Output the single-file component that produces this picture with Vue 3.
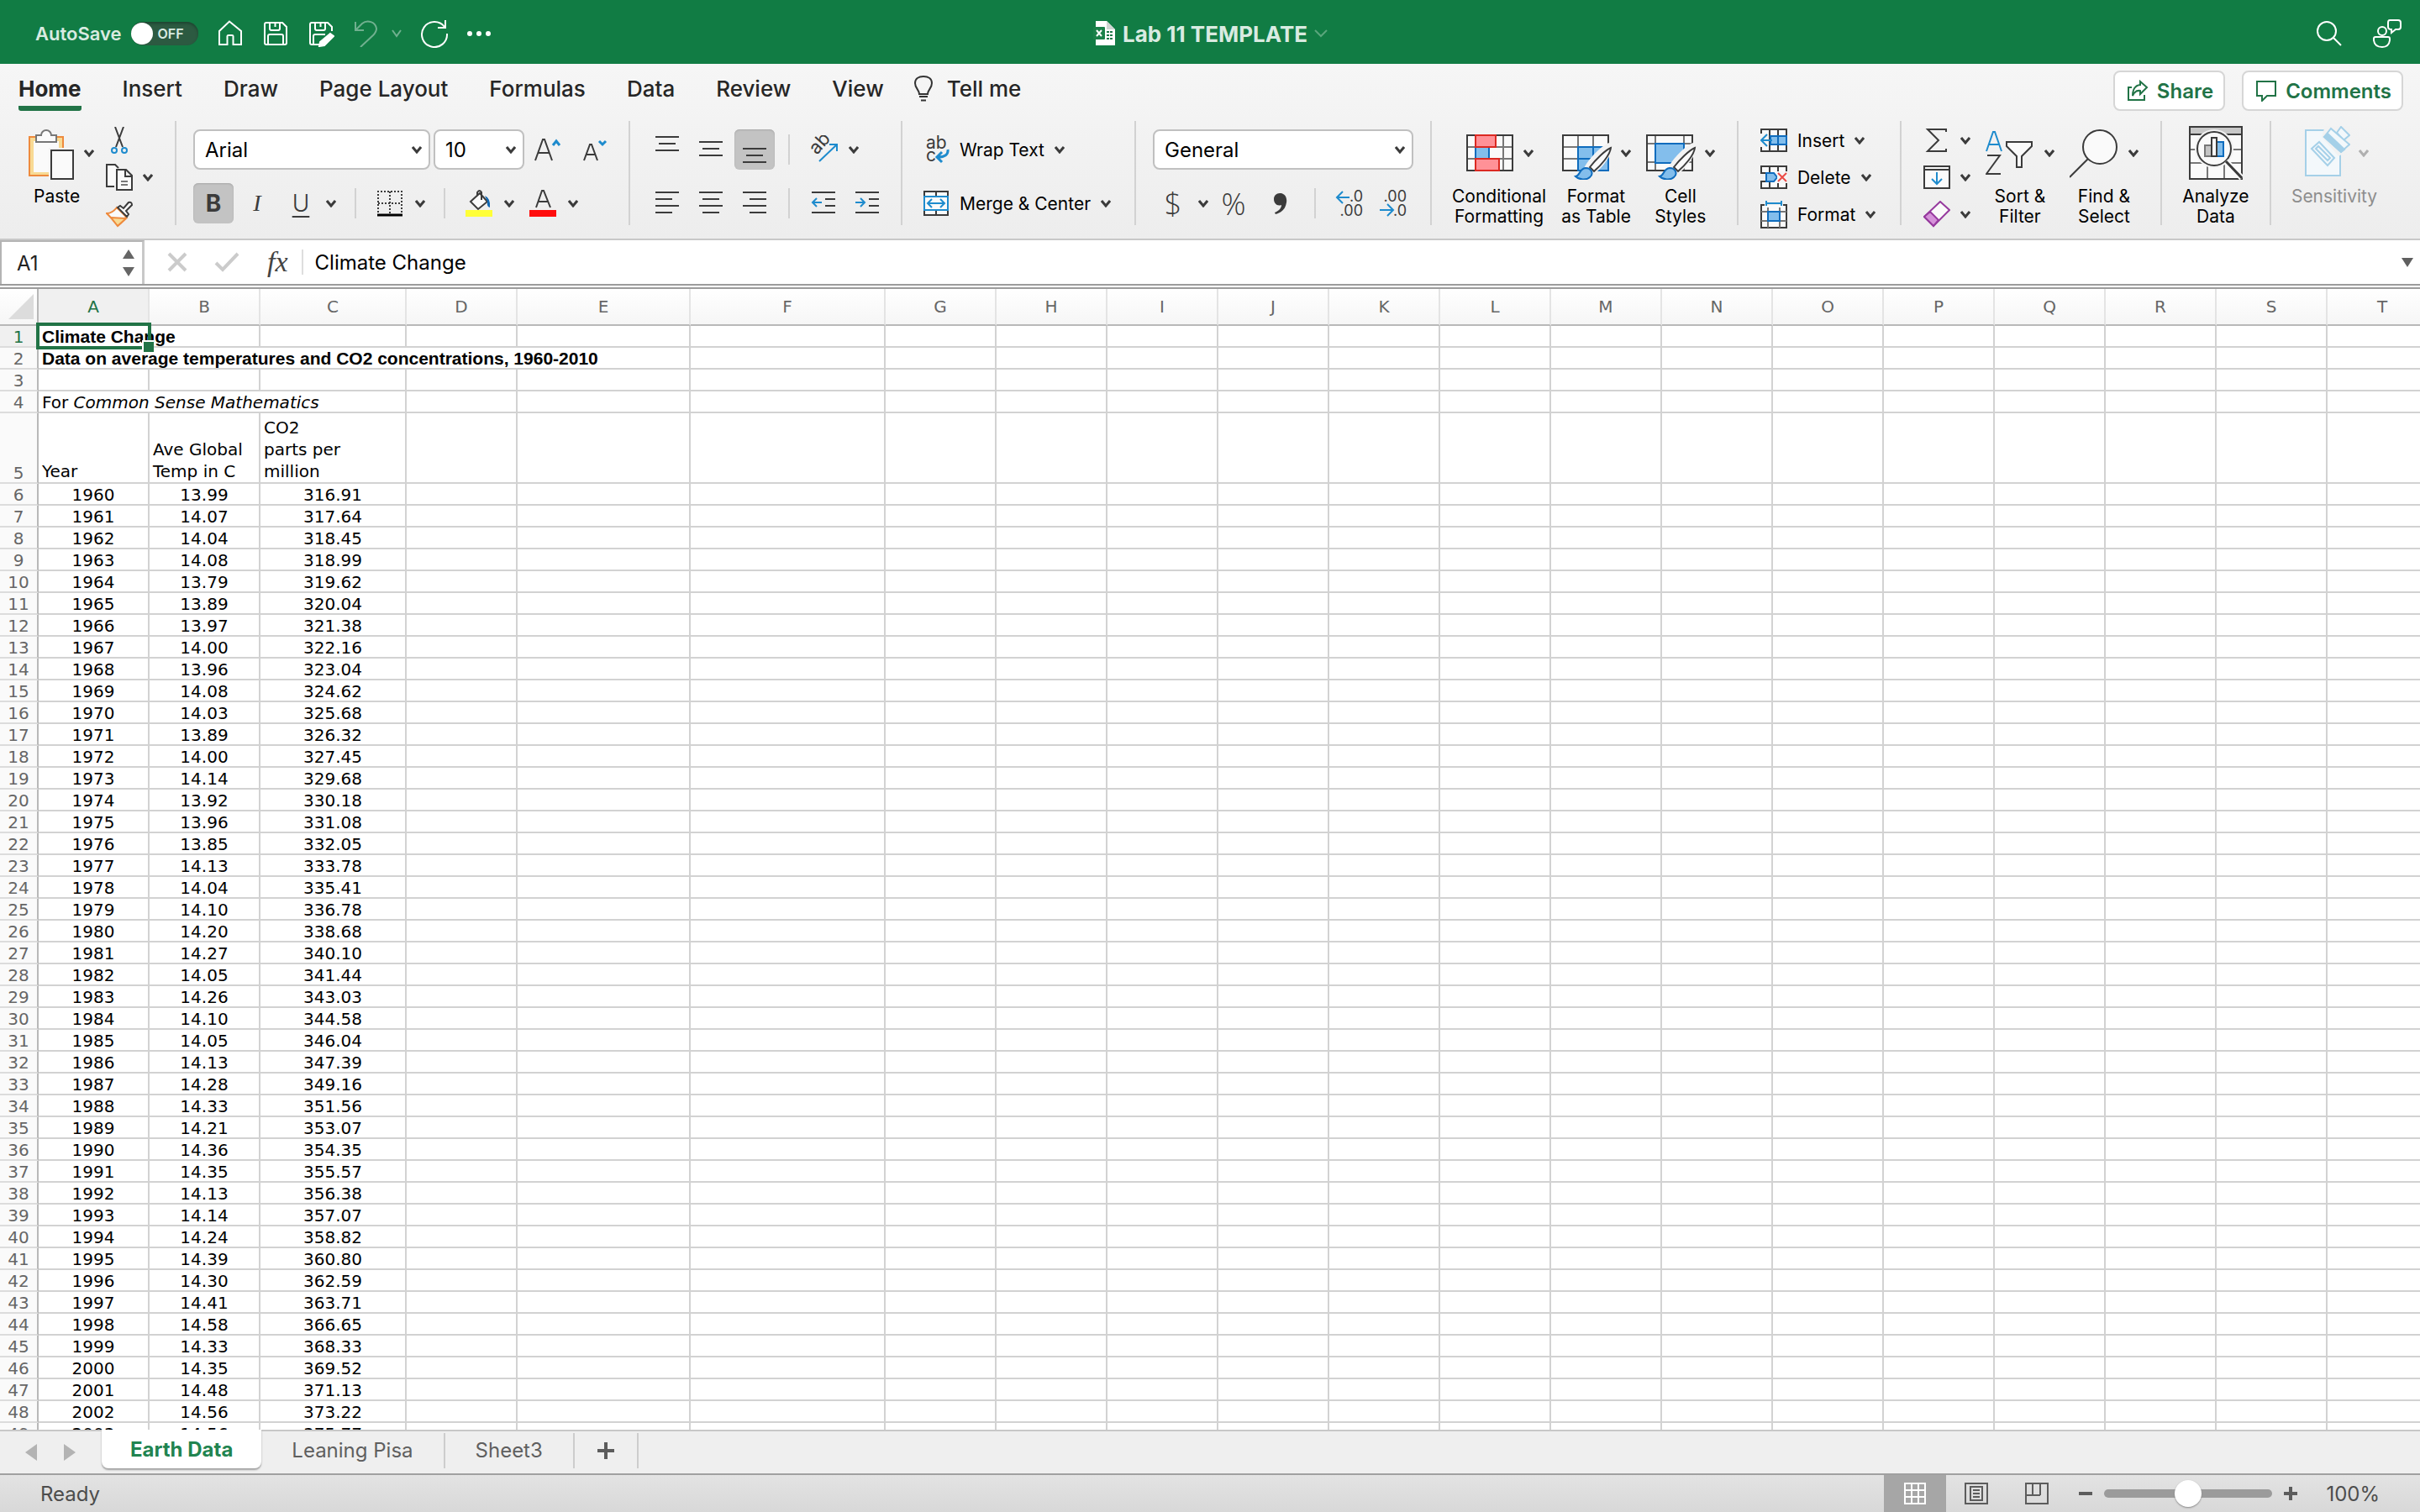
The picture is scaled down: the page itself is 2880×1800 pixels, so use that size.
<template>
  <div class="excel">
    <header class="titlebar">
      <div class="quick">
        <label class="autosave">
          AutoSave
          <input v-model="autoSave" type="checkbox" />
          <span class="switch"><i class="knob"></i>OFF</span>
        </label>
        <button class="qa" aria-label="Home">
          <svg width="32" height="32" viewBox="0 0 32 32"><path d="M3 13 L15 1.500 L29 13 V29 H19.500 V19 Q19.500 18 18 18 H14 Q12.500 18 12.500 19 V29 H3 Z" /></svg>
        </button>
        <button class="qa" aria-label="Save">
          <svg width="32" height="32" viewBox="0 0 32 32"><path d="M5 3 H24 L29 8 V27 Q29 29 27 29 H5 Q3 29 3 27 V5 Q3 3 5 3 Z M9 3 V10 Q9 12 11 12 H19 Q21 12 21 10 V3 M15.500 4 V8 M7 29 V19 Q7 17 9 17 H23 Q25 17 25 19 V29" /></svg>
        </button>
        <button class="qa" aria-label="Save as">
          <svg width="32" height="32" viewBox="0 0 32 32">
            <path d="M14 29 H5 Q3 29 3 27 V5 Q3 3 5 3 H24 L29 8 V13 M9 3 V10 Q9 12 11 12 H19 Q21 12 21 10 V3 M15.500 4 V8 M7 29 V19 Q7 17 9 17 H21" />
            <path d="M27 16 L31 19 L20 30 L14 31 L15 26 Z" fill="#fff" />
          </svg>
        </button>
        <span class="undo">
          <button class="qa" aria-label="Undo">
            <svg width="32" height="32" viewBox="0 0 32 32"><path d="M3 2 V12 H13 M3 12 L11 4 C17 -1 27 2 28 10 C28 14 26 16 24 18 L9 32" /></svg>
          </button>
          <button class="qa small" aria-label="Undo list">
            <svg width="12" height="10" viewBox="0 0 12 10"><path d="M1 1 L6 8 L11 1" /></svg>
          </button>
        </span>
        <button class="qa" aria-label="Redo">
          <svg width="34" height="34" viewBox="0 0 34 34"><path d="M30 1 V10 H21 M29 9 A15 15 0 1 0 32 17" /></svg>
        </button>
        <button class="qa" aria-label="More">
          <svg width="28" height="8" viewBox="0 0 28 8"><g fill="#fff" stroke="none"><circle cx="3" cy="4" r="3" /><circle cx="14" cy="4" r="3" /><circle cx="25" cy="4" r="3" /></g></svg>
        </button>
      </div>
      <div class="doc">
        <svg width="28" height="32" viewBox="0 0 28 32">
          <path d="M4 1 H17 L27 11 V30 H4 Z" fill="#fff" />
          <path d="M17 1 V11 H27 Z" fill="#cfd6d2" />
          <rect x="1" y="8" width="14" height="15" rx="1" fill="#1a8149" />
          <path d="M5 12 L11 19 M11 12 L5 19" stroke="#fff" stroke-width="2" />
          <path d="M17 13 h3 v2 h-3z M21 13 h3 v2 h-3z M17 17 h3 v2 h-3z M21 17 h3 v2 h-3z M17 21 h3 v2 h-3z M21 21 h3 v2 h-3z" fill="#1f7a4a" />
        </svg>
        <h1>Lab 11 TEMPLATE</h1>
        <svg width="16" height="10" viewBox="0 0 16 10"><path d="M1 1 L8 8 L15 1" fill="none" stroke="#5aa67c" stroke-width="2" /></svg>
      </div>
      <div class="account">
        <button class="qa" aria-label="Search">
          <svg width="32" height="32" viewBox="0 0 32 32"><circle cx="13" cy="13" r="11" /><path d="M21 21 L30 30" /></svg>
        </button>
        <button class="qa" aria-label="Sharing">
          <svg width="34" height="34" viewBox="0 0 34 34">
            <circle cx="11" cy="14" r="5" />
            <path d="M1 23 Q1 21 3 21 H18 Q20 21 20 23 V25 Q19 33 11 33 Q2 33 1 25 Z M20 1 H30 Q33 1 33 4 V9 Q33 12 30 12 H27 L22 16 V12 Q18 12 18 9 V4 Q18 1 20 1 Z" />
          </svg>
        </button>
      </div>
    </header>

    <section class="ribbon">
      <nav class="tabs">
        <a v-for="tab in tabs" :key="tab" href="#" :class="{ active: tab === 'Home' }">{{ tab }}</a>
        <a href="#" class="tell">
          <svg width="24" height="32" viewBox="0 0 24 32" fill="none" stroke="#333" stroke-width="2">
            <path d="M7 23 C7 18 2 16 2 10 C2 5 6 2 12 2 C18 2 22 5 22 10 C22 16 17 18 17 23 Z M7 26 H17 M9 30.500 H15" />
          </svg>
          Tell me
        </a>
        <div class="actions">
          <button class="pill">
            <svg width="26" height="26" viewBox="0 0 26 26"><path d="M6 9 H2 V24 H21 V18 M16 2 L24 9 L16 17 V13 Q10 12 7 19 Q7 7 16 6 Z" /></svg>
            Share
          </button>
          <button class="pill">
            <svg width="26" height="26" viewBox="0 0 26 26"><path d="M2 2 H24 V19 H14 L8 25 V19 H2 Z" /></svg>
            Comments
          </button>
        </div>
      </nav>

      <div class="tools">
        <div class="group clipboard">
          <button class="big paste">
            <span class="face">
              <svg width="56" height="64" viewBox="0 0 56 64">
                <rect x="1" y="13" width="40" height="46" fill="#f8da94" stroke="#ee8a3d" stroke-width="2" />
                <rect x="6" y="18" width="30" height="37" fill="#fafafa" />
                <path d="M9 11 H15 A6 6 0 0 1 27 11 H33 V19 H9 Z" fill="#fafafa" stroke="#777" stroke-width="2" />
                <rect x="24" y="26" width="32" height="40" fill="#f3f3f3" />
                <rect x="27" y="29" width="26" height="34" fill="#fafafa" stroke="#3b3b3b" stroke-width="2" />
              </svg>
              <Caret />
            </span>
            <span class="label">Paste</span>
          </button>
          <div class="stack">
            <button class="line" aria-label="Cut">
              <svg width="32" height="32" viewBox="0 0 32 32" fill="none">
                <path d="M11 0 L20 24 M21 0 L12 24" stroke="#3b3b3b" stroke-width="2" />
                <g stroke="#1e8bcd" stroke-width="2"><circle cx="10" cy="28" r="3" /><circle cx="22" cy="28" r="3" /></g>
              </svg>
            </button>
            <button class="line" aria-label="Copy">
              <svg width="32" height="32" viewBox="0 0 32 32" fill="#fafafa" stroke="#3b3b3b" stroke-width="2">
                <path d="M10 27 H1 V1 H11 L15 5" />
                <path d="M13 7 H24 L31 14 V31 H13 Z M23 7 V15 H31" />
                <path d="M18 21 H26 M18 25 H26" stroke="#777" />
              </svg>
              <Caret />
            </button>
            <button class="line" aria-label="Format painter">
              <svg width="32" height="32" viewBox="0 0 32 32" fill="#fafafa" stroke-width="2">
                <path d="M1 15 C6 15 10 12 13 8 L24 19 C22 24 18 26 15 29 Z" stroke="#ee8a3d" />
                <path d="M6 20 L24 21 L14 30 Z" fill="#f8da94" stroke="#ee8a3d" />
                <path d="M14 8 L17 6 L21 9 L27 2 Q31 1 31 5 L24 12 L27 16 L25 19 Z" stroke="#3b3b3b" />
              </svg>
            </button>
          </div>
        </div>

        <div class="group rows font">
          <div class="row">
            <label class="combo font-name">
              <select aria-label="Font"><option>Arial</option></select>
              <Caret />
            </label>
            <label class="combo font-size">
              <select aria-label="Font size"><option>10</option></select>
              <Caret />
            </label>
            <button class="tool" aria-label="Increase font size">
              <svg width="32" height="32" viewBox="0 0 32 32" fill="none" stroke-width="2">
                <path d="M1 29 L10 4 H12 L21 29 M5 20 H17" stroke="#3b3b3b" /><path d="M22 11 L26 6 L30 11" stroke="#1e8bcd" stroke-width="3" />
              </svg>
            </button>
            <button class="tool gap" aria-label="Decrease font size">
              <svg width="32" height="32" viewBox="0 0 32 32" fill="none" stroke-width="2">
                <path d="M3 29 L10 10 H12 L19 29 M6 22 H16" stroke="#3b3b3b" /><path d="M21 6 L25 10 L29 6" stroke="#1e8bcd" stroke-width="3" />
              </svg>
            </button>
          </div>
          <div class="row">
            <button class="tool on bold">B</button>
            <button class="tool italic">I</button>
            <button class="tool underline">U</button>
            <button class="drop" aria-label="Underline style"><Caret /></button>
            <span class="rule"></span>
            <button class="tool" aria-label="Borders">
              <svg width="32" height="32" viewBox="0 0 32 32" fill="none" stroke="#3b3b3b" stroke-width="2">
                <path d="M1 2 H31 M2 1 V28 M30 1 V28 M2 16 H30 M16 2 V28" stroke-dasharray="2 2" />
                <path d="M1 30 H31" stroke="#000" stroke-width="3" />
              </svg>
            </button>
            <button class="drop" aria-label="Border style"><Caret /></button>
            <span class="rule"></span>
            <button class="tool" aria-label="Fill colour">
              <svg width="32" height="32" viewBox="0 0 32 32">
                <path d="M6 14 L17 4 L26 14 L15 23 Z M14 7 V3 Q17 -1 19 3 V12" fill="#fafafa" stroke="#3b3b3b" stroke-width="2" />
                <path d="M23 7 Q30 10 29 21 Q25 20 26 14 Z" fill="#1068b4" />
                <rect y="24" width="32" height="8" fill="#ffff38" />
              </svg>
            </button>
            <button class="drop" aria-label="Fill colours"><Caret /></button>
            <button class="tool gap" aria-label="Font colour">
              <svg width="32" height="32" viewBox="0 0 32 32">
                <path d="M8 21 L15 1 H17 L25 21 M11 14 H22" fill="none" stroke="#3b3b3b" stroke-width="2" />
                <rect y="24" width="32" height="8" fill="#ff0d0d" />
              </svg>
            </button>
            <button class="drop" aria-label="Font colours"><Caret /></button>
          </div>
        </div>

        <div class="group rows align">
          <div class="row">
            <button class="tool" aria-label="Top align"><Lines d="M1 2 H29 M5 10 H25 M1 18 H29" /></button>
            <button class="tool" aria-label="Middle align"><Lines d="M1 8 H29 M5 16 H25 M1 24 H29" /></button>
            <button class="tool on" aria-label="Bottom align"><Lines d="M1 16 H29 M5 24 H25 M1 32 H29" /></button>
            <span class="rule"></span>
            <button class="tool" aria-label="Orientation">
              <svg width="34" height="34" viewBox="0 0 34 34">
                <text transform="translate(9 24) rotate(-48)" font-size="22" fill="#3b3b3b">ab</text>
                <path d="M12 31 L33 11 M24 11 H33 V19" fill="none" stroke="#1e8bcd" stroke-width="2" />
              </svg>
            </button>
            <button class="drop" aria-label="Orientation list"><Caret /></button>
          </div>
          <div class="row">
            <button class="tool" aria-label="Align left"><Lines d="M1 4 H29 M1 12 H21 M1 20 H29 M1 28 H21" /></button>
            <button class="tool" aria-label="Centre"><Lines d="M1 4 H29 M5 12 H25 M1 20 H29 M5 28 H25" /></button>
            <button class="tool" aria-label="Align right"><Lines d="M1 4 H29 M9 12 H29 M1 20 H29 M9 28 H29" /></button>
            <span class="rule"></span>
            <button class="tool" aria-label="Decrease indent"><Lines d="M1 4 H29 M17 12 H29 M17 20 H29 M1 28 H29" arrow="M13 16 H2 M7 11 L2 16 L7 21" /></button>
            <button class="tool" aria-label="Increase indent"><Lines d="M1 4 H29 M17 12 H29 M17 20 H29 M1 28 H29" arrow="M1 16 H12 M7 11 L12 16 L7 21" /></button>
          </div>
        </div>

        <div class="group rows wrap">
          <button class="line tall">
            <svg width="32" height="34" viewBox="0 0 32 34">
              <text x="4" y="16" font-size="21" fill="#3b3b3b">ab</text>
              <text x="4" y="31" font-size="21" fill="#3b3b3b">c</text>
              <path d="M30 17 Q31 26 18 26 M23 20 L17 26 L23 32" fill="none" stroke="#1e8bcd" stroke-width="3" />
            </svg>
            Wrap Text
            <Caret />
          </button>
          <button class="line tall">
            <svg width="32" height="32" viewBox="0 0 32 32" fill="#fafafa" stroke-width="2">
              <path d="M2 2 H30 V30 H2 Z M16 2 V30" stroke="#3b3b3b" />
              <rect x="2" y="8" width="28" height="16" stroke="#1e8bcd" />
              <path d="M6 16 H26 M11 11 L6 16 L11 21 M21 11 L26 16 L21 21" fill="none" stroke="#1e8bcd" stroke-width="2" />
            </svg>
            Merge &amp; Center
            <Caret />
          </button>
        </div>

        <div class="group rows">
          <div class="row">
            <label class="combo number">
              <select aria-label="Number format"><option>General</option></select>
              <Caret />
            </label>
          </div>
          <div class="row">
            <button class="tool glyph">$</button>
            <button class="drop" aria-label="Currencies"><Caret /></button>
            <button class="tool glyph">%</button>
            <button class="tool" aria-label="Comma style">
              <svg width="32" height="32" viewBox="0 0 32 32"><path d="M19 4 C25 4 28 9 27 15 C26 22 22 27 14 29 L13 27 C18 25 21 22 21 18 C16 20 12 16 12 11 C12 7 15 4 19 4 Z" fill="#3b3b3b" /></svg>
            </button>
            <span class="rule"></span>
            <button class="tool" aria-label="Increase decimal">
              <svg width="34" height="34" viewBox="0 0 34 34">
                <text x="33" y="15" text-anchor="end" font-size="18" fill="#3b3b3b">.0</text>
                <text x="33" y="32" text-anchor="end" font-size="18" fill="#3b3b3b">.00</text>
                <path d="M17 10 H2 M9 3 L2 10 L9 17" fill="none" stroke="#1e8bcd" stroke-width="2" />
              </svg>
            </button>
            <button class="tool" aria-label="Decrease decimal">
              <svg width="34" height="34" viewBox="0 0 34 34">
                <text x="33" y="15" text-anchor="end" font-size="18" fill="#3b3b3b">.00</text>
                <text x="33" y="32" text-anchor="end" font-size="18" fill="#3b3b3b">.0</text>
                <path d="M1 25 H16 M10 18 L17 25 L10 32" fill="none" stroke="#1e8bcd" stroke-width="2" />
              </svg>
            </button>
          </div>
        </div>

        <div class="group styles">
          <button class="big">
            <span class="face">
              <svg width="60" height="64" viewBox="0 0 60 64" stroke-width="2">
                <rect x="3" y="11" width="54" height="42" fill="#fafafa" />
                <path d="M3 25 H57 M3 39 H57 M13 11 V53 M46 11 V53" stroke="#777" fill="none" />
                <rect x="3" y="11" width="54" height="42" fill="none" stroke="#3b3b3b" />
                <rect x="14" y="26" width="24" height="12" fill="#fafafa" />
                <rect x="13" y="25" width="16" height="14" fill="#83beec" stroke="#0f6cbd" />
                <rect x="13" y="11" width="24" height="14" fill="#ff9197" stroke="#db2922" />
                <rect x="13" y="39" width="28" height="14" fill="#ff9197" stroke="#db2922" />
              </svg>
              <Caret />
            </span>
            <span class="label">Conditional<br />Formatting</span>
          </button>
          <button class="big">
            <span class="face">
              <svg width="60" height="64" viewBox="0 0 60 64" stroke-width="2">
                <rect x="1" y="11" width="54" height="42" fill="#fafafa" />
                <path d="M1 25 H55 M1 39 H55 M19 11 V53 M37 11 V53" stroke="#777" fill="none" />
                <rect x="1" y="11" width="54" height="42" fill="none" stroke="#3b3b3b" />
                <path d="M19 25 H55 V53 H19 Z M19 39 H55 M37 25 V53" fill="#83beec" stroke="#0f6cbd" />
                <Brush />
              </svg>
              <Caret />
            </span>
            <span class="label">Format<br />as Table</span>
          </button>
          <button class="big">
            <span class="face">
              <svg width="60" height="64" viewBox="0 0 60 64" stroke-width="2">
                <rect x="1" y="11" width="54" height="42" fill="#fafafa" />
                <path d="M1 21 H55 M1 43 H55 M11 11 V53 M45 11 V53" stroke="#777" fill="none" />
                <rect x="1" y="11" width="54" height="42" fill="none" stroke="#3b3b3b" />
                <rect x="11" y="21" width="34" height="23" fill="#83beec" stroke="#0f6cbd" />
                <Brush />
              </svg>
              <Caret />
            </span>
            <span class="label">Cell<br />Styles</span>
          </button>
        </div>

        <div class="group cells">
          <div class="stack">
            <button class="line">
              <svg width="32" height="32" viewBox="0 0 32 32" fill="#fafafa" stroke-width="2">
                <path d="M1 3 H31 V29 H1 Z M11 3 V29 M21 3 V29" stroke="#3b3b3b" />
                <rect x="12" y="11" width="19" height="10" fill="#83beec" stroke="#0f6cbd" /><path d="M21 11 V21" stroke="#0f6cbd" />
                <path d="M0 8 H9 V24 H0 Z" fill="#f5f5f5" />
                <path d="M14 16 H2 M8 9 L1 16 L8 23" fill="none" stroke="#1e8bcd" />
              </svg>
              Insert
              <Caret />
            </button>
            <button class="line">
              <svg width="32" height="32" viewBox="0 0 32 32" fill="#fafafa" stroke-width="2">
                <path d="M1 3 H31 V29 H1 V21 H7 V11 H1 Z M11 3 V10 M21 3 V10 M11 22 V29 M21 22 V29" stroke="#3b3b3b" />
                <path d="M7 11 H16 L20 16 L16 21 H7 Z" fill="#83beec" stroke="#0f6cbd" />
                <path d="M20 9 H32 V23 H20 Z" fill="#f5f5f5" />
                <path d="M21 11 L31 21 M31 11 L21 21" stroke="#ec4b46" />
              </svg>
              Delete
              <Caret />
            </button>
            <button class="line">
              <svg width="32" height="34" viewBox="0 0 32 34" fill="#fafafa" stroke-width="2">
                <path d="M5 6 H1 V33 H31 V6 H27" stroke="#3b3b3b" />
                <path d="M9 9 V33 M23 9 V33 M1 14 H31 M1 25 H31" stroke="#777" />
                <rect x="9" y="14" width="14" height="11" fill="#83beec" stroke="#0f6cbd" />
                <path d="M7 1 V7 M25 1 V7 M7 4 H25" stroke="#1e8bcd" />
              </svg>
              Format
              <Caret />
            </button>
          </div>
        </div>

        <div class="group editing">
          <div class="stack">
            <button class="line" aria-label="AutoSum">
              <svg width="32" height="32" viewBox="0 0 32 32" fill="none" stroke="#3b3b3b" stroke-width="2"><path d="M27 6 V3 H5 L18 16 L5 29 H27 V26" /></svg>
              <Caret />
            </button>
            <button class="line" aria-label="Fill">
              <svg width="32" height="32" viewBox="0 0 32 32" fill="#fafafa" stroke="#3b3b3b" stroke-width="2">
                <path d="M1 3 H31 V29 H1 Z M1 7 H31" /><path d="M16 10 V24 M10 18 L16 24 L22 18" fill="none" stroke="#1e8bcd" />
              </svg>
              <Caret />
            </button>
            <button class="line" aria-label="Clear">
              <svg width="32" height="32" viewBox="0 0 32 32" stroke="#963a9e" stroke-width="2">
                <path d="M1 19 L20 1 L31 11 L12 30 Z" fill="#fafafa" /><path d="M1 19 L8 13 L18 23 L12 30 Z" fill="#d592d9" />
              </svg>
              <Caret />
            </button>
          </div>
          <button class="big">
            <span class="face">
              <svg width="60" height="64" viewBox="0 0 60 64" fill="none" stroke-width="2">
                <path d="M1 30 L9 7 H11 L19 30 M4 22 H16" stroke="#1e8bcd" />
                <path d="M2 35 H17 L1 57 H18" stroke="#3b3b3b" />
                <path d="M25 19 H55 V24 L43 36 V49 H37 V36 L25 24 Z" fill="#fafafa" stroke="#3b3b3b" />
              </svg>
              <Caret />
            </span>
            <span class="label">Sort &amp;<br />Filter</span>
          </button>
          <button class="big">
            <span class="face">
              <svg width="60" height="64" viewBox="0 0 60 64" stroke="#3b3b3b" stroke-width="2">
                <circle cx="36" cy="25" r="20" fill="#fafafa" /><path d="M22 39 L0 61" />
              </svg>
              <Caret />
            </span>
            <span class="label">Find &amp;<br />Select</span>
          </button>
        </div>

        <div class="group analyze">
          <button class="big">
            <span class="face">
              <svg width="64" height="64" viewBox="0 0 64 64" fill="#fafafa" stroke-width="2">
                <rect x="1" y="1" width="62" height="62" stroke="#3b3b3b" />
                <rect x="2" y="2" width="60" height="8" fill="#c8c8c8" />
                <path d="M2 10 H62" stroke="#3b3b3b" />
                <path d="M2 28 H62 M2 44 H62 M22 44 V62 M42 44 V62" stroke="#777" />
                <circle cx="30" cy="27" r="23" fill="#f2f2f2" />
                <circle cx="30" cy="27" r="20" stroke="#3b3b3b" />
                <path d="M44 42 L63 62" stroke="#fafafa" stroke-width="7" />
                <path d="M44 42 L63 62" stroke="#3b3b3b" stroke-width="3" />
                <rect x="19" y="23" width="8" height="13" fill="#c4c4c4" stroke="#777" />
                <rect x="33" y="19" width="8" height="17" fill="#83beec" stroke="#0f6cbd" />
                <rect x="27" y="14" width="6" height="22" stroke="#3b3b3b" />
              </svg>
            </span>
            <span class="label">Analyze<br />Data</span>
          </button>
        </div>

        <div class="group last">
          <button class="big" disabled>
            <span class="face">
              <svg width="60" height="64" viewBox="0 0 60 64" fill="#f3f8fb" stroke="#a5d0e8" stroke-width="2">
                <rect x="7" y="5" width="41" height="54" />
                <path d="M30 0 H60 V28 L46 36 L26 13 Z" fill="#f2f2f2" stroke="none" />
                <path d="M14 27 L23 19 L41 38 L33 47 Z" /><path d="M19 27 L22 24 L36 38 L33 41 Z" />
                <path d="M44 8 L49 1 L59 11 L52 17 Z" />
                <path d="M29 13 L37 3 L59 22 L49 31 Z" /><path d="M29 13 L33 9 L53 28 L49 31 Z" fill="#a5d0e8" />
              </svg>
              <Caret />
            </span>
            <span class="label">Sensitivity</span>
          </button>
        </div>
      </div>
    </section>

    <section class="formula">
      <div class="namebox">
        <input aria-label="Name box" value="A1" />
        <svg width="16" height="34" viewBox="0 0 16 34" fill="#666"><path d="M1 12 L8 1 L15 12 Z M1 22 L8 33 L15 22 Z" /></svg>
      </div>
      <button class="cross" aria-label="Cancel">
        <svg width="24" height="24" viewBox="0 0 24 24"><path d="M2 2 L22 22 M22 2 L2 22" /></svg>
      </button>
      <button class="tick" aria-label="Enter">
        <svg width="30" height="24" viewBox="0 0 30 24"><path d="M2 13 L10 21 L28 2" /></svg>
      </button>
      <button class="fx"><i>f</i>x</button>
      <input class="entry" aria-label="Formula" value="Climate Change" />
      <button class="expand" aria-label="Expand formula bar">
        <svg width="14" height="11" viewBox="0 0 14 11"><path d="M0 0 H14 L7 11 Z" fill="#5f5f5f" /></svg>
      </button>
    </section>

    <main class="sheet">
      <table :style="{ width: tableWidth + 'px' }">
        <colgroup>
          <col :style="{ width: '46px' }" />
          <col v-for="col in columns" :key="col.name" :style="{ width: col.width + 'px' }" />
        </colgroup>
        <thead>
          <tr>
            <th class="corner"><svg width="32" height="32" viewBox="0 0 32 32"><path d="M31 1 V31 H1 Z" fill="#dcdcdc" /></svg></th>
            <th v-for="col in columns" :key="col.name" scope="col" :class="{ picked: col.name === 'A' }">{{ col.name }}</th>
          </tr>
        </thead>
        <tbody>
          <tr>
            <th scope="row" class="picked">1</th>
            <td colspan="2" class="current"><b>Climate Change</b><span class="selection"></span></td>
            <td v-for="n in 18" :key="n"></td>
          </tr>
          <tr>
            <th scope="row">2</th>
            <td colspan="5"><b>Data on average temperatures and CO2 concentrations, 1960-2010</b></td>
            <td v-for="n in 15" :key="n"></td>
          </tr>
          <tr>
            <th scope="row">3</th>
            <td v-for="n in 20" :key="n"></td>
          </tr>
          <tr>
            <th scope="row">4</th>
            <td colspan="3">For <em>Common Sense Mathematics</em></td>
            <td v-for="n in 17" :key="n"></td>
          </tr>
          <tr class="titles">
            <th scope="row">5</th>
            <td>Year</td>
            <td>Ave Global<br />Temp in C</td>
            <td>CO2<br />parts per<br />million</td>
            <td v-for="n in 17" :key="n"></td>
          </tr>
          <tr v-for="(row, i) in readings" :key="i">
            <th scope="row">{{ i + 6 }}</th>
            <td class="num">{{ 1960 + i }}</td>
            <td class="num">{{ row[0].toFixed(2) }}</td>
            <td class="num">{{ row[1].toFixed(2) }}</td>
            <td v-for="n in 17" :key="n"></td>
          </tr>
        </tbody>
      </table>
    </main>

    <nav class="sheets">
      <button class="step" aria-label="Previous sheet"><svg width="14" height="20" viewBox="0 0 14 20"><path d="M14 0 V20 L0 10 Z" fill="#b3b3b3" /></svg></button>
      <button class="step" aria-label="Next sheet"><svg width="14" height="20" viewBox="0 0 14 20"><path d="M0 0 V20 L14 10 Z" fill="#b3b3b3" /></svg></button>
      <a href="#" class="active">Earth Data</a>
      <a href="#">Leaning Pisa</a>
      <a href="#">Sheet3</a>
      <button class="add" aria-label="Add sheet"><svg width="22" height="22" viewBox="0 0 22 22"><path d="M11 1 V21 M1 11 H21" stroke="#5c5c5c" stroke-width="4" /></svg></button>
    </nav>

    <footer class="status">
      <span class="ready">Ready</span>
      <button class="view on" aria-label="Normal view">
        <svg width="28" height="28" viewBox="0 0 28 28"><path d="M2 2 H26 V26 H2 Z M10 2 V26 M18 2 V26 M2 10 H26 M2 18 H26" /></svg>
      </button>
      <button class="view" aria-label="Page layout view">
        <svg width="28" height="28" viewBox="0 0 28 28"><path d="M1 2 H27 V26 H1 Z M7 6 H21 V22 H7 Z M10 10 H18 M10 14 H18 M10 18 H18" /></svg>
      </button>
      <button class="view" aria-label="Page break view">
        <svg width="28" height="28" viewBox="0 0 28 28"><path d="M1 2 H27 V26 H1 Z M9 2 V16 M18 2 V16 M1 16 H18" /></svg>
      </button>
      <button class="zoom-btn" aria-label="Zoom out"><svg width="16" height="16" viewBox="0 0 16 16"><path d="M0 8 H16" stroke="#5c5c5c" stroke-width="4" /></svg></button>
      <input v-model="zoom" class="zoom" type="range" min="0" max="200" aria-label="Zoom" />
      <button class="zoom-btn" aria-label="Zoom in"><svg width="16" height="16" viewBox="0 0 16 16"><path d="M0 8 H16 M8 0 V16" stroke="#5c5c5c" stroke-width="4" /></svg></button>
      <span class="percent">{{ zoom }}%</span>
    </footer>
  </div>
</template>

<script setup>
import { h, ref } from 'vue'

const autoSave = ref(false)
const zoom = ref(100)

const tabs = ['Home', 'Insert', 'Draw', 'Page Layout', 'Formulas', 'Data', 'Review', 'View']

// small drop-down arrow
const Caret = () =>
  h('svg', { class: 'caret', width: 12, height: 9, viewBox: '0 0 12 9' }, [
    h('path', { d: 'M1 1 L6 7 L11 1', fill: 'none', stroke: 'currentColor', 'stroke-width': 3 })
  ])

// text-alignment lines, with an optional blue arrow
const Lines = (props) =>
  h('svg', { width: 30, height: 34, viewBox: '0 0 30 34', fill: 'none', 'stroke-width': 2 }, [
    h('path', { d: props.d, stroke: '#3b3b3b' }),
    props.arrow ? h('path', { d: props.arrow, stroke: '#1e8bcd' }) : null
  ])
Lines.props = ['d', 'arrow']

const Brush = () =>
  h('g', [
    h('path', { d: 'M58 22 C50 24 36 38 30 48 L38 54 C47 47 58 32 58 22 Z', fill: '#f3f3f3', stroke: '#f3f3f3', 'stroke-width': 5 }),
    h('path', { d: 'M58 26 C51 29 40 40 33 49 L38 54 C46 47 57 35 58 26 Z', fill: '#fafafa', stroke: '#3b3b3b' }),
    h('path', { d: 'M16 60 C22 59 20 51 28 50 C35 50 38 57 33 61 C29 65 20 64 16 60 Z', fill: '#83beec', stroke: '#0f6cbd' })
  ])

const widths = { C: 174, E: 206, F: 232 }
const columns = 'ABCDEFGHIJKLMNOPQRST'.split('').map((name) => ({ name, width: widths[name] || 132 }))
const tableWidth = columns.reduce((sum, col) => sum + col.width, 46)

// [temperature, CO2] for each year from 1960
const readings = [
  [13.99, 316.91], [14.07, 317.64], [14.04, 318.45], [14.08, 318.99], [13.79, 319.62],
  [13.89, 320.04], [13.97, 321.38], [14.0, 322.16], [13.96, 323.04], [14.08, 324.62],
  [14.03, 325.68], [13.89, 326.32], [14.0, 327.45], [14.14, 329.68], [13.92, 330.18],
  [13.96, 331.08], [13.85, 332.05], [14.13, 333.78], [14.04, 335.41], [14.1, 336.78],
  [14.2, 338.68], [14.27, 340.1], [14.05, 341.44], [14.26, 343.03], [14.1, 344.58],
  [14.05, 346.04], [14.13, 347.39], [14.28, 349.16], [14.33, 351.56], [14.21, 353.07],
  [14.36, 354.35], [14.35, 355.57], [14.13, 356.38], [14.14, 357.07], [14.24, 358.82],
  [14.39, 360.8], [14.3, 362.59], [14.41, 363.71], [14.58, 366.65], [14.33, 368.33],
  [14.35, 369.52], [14.48, 371.13], [14.56, 373.22], [14.56, 375.77]
]
</script>

<style>
body {
  margin: 0;
  overflow: hidden;
}
</style>

<style scoped>
.excel {
  display: flex;
  flex-direction: column;
  height: 100vh;
  overflow: hidden;
  background: #fff;
  color: #000;
  font-family: Inter, "Liberation Sans", sans-serif;
  font-size: 21px;
}
.excel * {
  box-sizing: border-box;
}
button,
select,
input {
  margin: 0;
  padding: 0;
  border: 0;
  background: none;
  color: inherit;
  font: inherit;
}
a {
  color: inherit;
  text-decoration: none;
}
svg {
  display: block;
  flex: none;
}

/* title bar */
.titlebar {
  display: grid;
  grid-template-columns: 1fr auto 1fr;
  align-items: center;
  flex: none;
  height: 76px;
  padding: 4px 22px 0;
  background: #117c44;
  color: #d9ebe1;
}
.quick,
.account,
.doc,
.undo {
  display: flex;
  align-items: center;
}
.quick {
  gap: 22px;
  padding-left: 20px;
}
.autosave {
  display: flex;
  align-items: center;
  gap: 11px;
  font-size: 22px;
  font-weight: 600;
}
.autosave input {
  position: absolute;
  opacity: 0;
}
.switch {
  display: flex;
  align-items: center;
  gap: 6px;
  width: 80px;
  height: 28px;
  border-radius: 14px;
  background: #2c5a41;
  box-shadow: inset 0 2px 3px #1d4530;
  font-size: 16px;
}
.knob {
  width: 26px;
  height: 26px;
  border-radius: 13px;
  background: #fff;
}
.qa svg {
  fill: none;
  stroke: #fff;
  stroke-width: 2;
}
.undo {
  gap: 14px;
  opacity: 0.4;
}
.doc {
  gap: 8px;
}
.doc h1 {
  margin: 0;
  font-size: 26px;
  font-weight: 700;
}
.account {
  justify-content: flex-end;
  gap: 36px;
}

/* ribbon */
.ribbon {
  flex: none;
  border-bottom: 2px solid #c8c8c8;
  background: linear-gradient(#f6f6f6, #ededed);
}
.tabs {
  display: flex;
  align-items: center;
  gap: 49px;
  height: 68px;
  padding: 0 20px 4px 22px;
  color: #262626;
  font-size: 26px;
  font-weight: 500;
}
.tabs a {
  display: flex;
  align-items: center;
  height: 48px;
  border-bottom: 6px solid transparent;
  border-radius: 3px;
}
.tabs .active {
  border-color: #217346;
  font-weight: 700;
}
.tabs .tell {
  gap: 16px;
  margin-left: -14px;
}
.actions {
  display: flex;
  gap: 20px;
  margin-left: auto;
}
.pill {
  display: flex;
  align-items: center;
  gap: 10px;
  height: 48px;
  padding: 0 12px 0 14px;
  border: 2px solid #d6d6d6;
  border-radius: 8px;
  background: #fff;
  color: #217346;
  font-size: 24px;
  font-weight: 600;
}
.pill svg {
  fill: none;
  stroke: #217346;
  stroke-width: 2;
}
.tools {
  display: flex;
  height: 140px;
  padding-bottom: 16px;
  white-space: nowrap;
}
.group {
  display: flex;
  flex: none;
  border-right: 2px solid #d2d2d2;
}
.group.last {
  padding-left: 24px;
  border: 0;
}
.caret {
  color: #3b3b3b;
}
.clipboard {
  gap: 14px;
  min-width: 210px;
  padding-left: 34px;
}
.stack {
  display: flex;
  flex-direction: column;
  padding-top: 1px;
}
.line {
  display: flex;
  align-items: center;
  flex: none;
  gap: 12px;
  height: 44px;
}
.line.tall {
  height: 48px;
}
.big {
  display: flex;
  flex-direction: column;
  align-items: center;
  gap: 8px;
  padding-top: 6px;
  line-height: 24px;
}
.big.paste {
  align-items: flex-start;
}
.paste .label {
  padding-left: 6px;
}
.big:disabled {
  color: #8d8d8d;
}
.big:disabled .caret {
  color: #b0b0b0;
}
.face {
  display: flex;
  align-items: center;
  gap: 10px;
}
.rows {
  flex-direction: column;
  gap: 16px;
  padding: 10px 20px 0;
}
.row {
  display: flex;
  align-items: center;
  gap: 4px;
  height: 48px;
}
.tool {
  display: flex;
  align-items: center;
  justify-content: center;
  width: 48px;
  height: 48px;
  border-radius: 6px;
  color: #3b3b3b;
  font-size: 28px;
}
.tool.on {
  background: #c3c3c3;
  box-shadow: inset 0 1px 2px #a8a8a8;
}
.tool.gap {
  margin-left: 4px;
}
.bold {
  font-weight: 700;
}
.italic {
  font-family: "Liberation Serif", serif;
  font-style: italic;
}
.underline {
  text-decoration: underline;
  text-underline-offset: 5px;
  font-weight: 300;
}
.glyph {
  font-family: "Open Sans", sans-serif;
  font-size: 36px;
  font-weight: 300;
}
.drop {
  display: flex;
  justify-content: center;
  width: 16px;
}
.rule {
  width: 2px;
  height: 36px;
  margin: 0 12px 0 16px;
  background: #d2d2d2;
}
.font {
  min-width: 540px;
  padding-right: 12px;
}
.align {
  min-width: 324px;
  padding-right: 14px;
}
.align .rule {
  margin: 0 12px;
}
.combo {
  position: relative;
}
.combo select {
  width: 100%;
  height: 48px;
  padding-left: 12px;
  border: 2px solid #c0c0c0;
  border-radius: 8px;
  background: #fff;
  appearance: none;
  font-size: 24px;
}
.combo .caret {
  position: absolute;
  top: 20px;
  right: 10px;
  pointer-events: none;
}
.font-name {
  width: 282px;
}
.font-size {
  width: 108px;
}
.number {
  width: 310px;
}
.wrap {
  min-width: 278px;
  padding: 10px 16px 0 24px;
}
.styles {
  gap: 18px;
  padding: 0 26px 0 24px;
}
.cells {
  min-width: 194px;
  padding-left: 26px;
}
.cells .line {
  padding-right: 24px;
}
.editing {
  gap: 18px;
  padding: 0 26px;
}
.analyze {
  justify-content: center;
  min-width: 130px;
}

/* formula bar */
.formula {
  display: flex;
  align-items: center;
  flex: none;
  height: 58px;
  padding-right: 8px;
  border-bottom: 6px double #9c9c9c;
  background: #fff;
  color: #222;
}
.namebox {
  display: flex;
  align-items: center;
  justify-content: space-between;
  width: 172px;
  height: 52px;
  padding: 0 8px 0 18px;
  border: 2px solid #b4b4b4;
  border-right: 3px solid #c8c8c8;
  border-bottom: 0;
}
.namebox input {
  width: 100px;
  font-size: 24px;
}
.cross {
  margin-left: 27px;
}
.tick {
  margin-left: 32px;
}
.cross path,
.tick path {
  fill: none;
  stroke: #cbcbcb;
  stroke-width: 4;
}
.fx {
  height: 30px;
  margin-left: 33px;
  padding-right: 16px;
  border-right: 2px solid #dedede;
  color: #444;
  font: italic 34px/26px "Liberation Serif", serif;
}
.entry {
  flex: 1;
  min-width: 0;
  padding-left: 14px;
  color: #000;
  font-size: 24px;
}

/* grid */
.sheet {
  flex: 1;
  min-height: 0;
  overflow: hidden;
}
table {
  border-spacing: 0;
  table-layout: fixed;
  font-family: "DejaVu Sans", sans-serif;
  font-size: 20px;
  line-height: 22px;
}
th {
  height: 26px;
  padding: 2px 0 0;
  border-right: 2px solid #b8b8b8;
  border-bottom: 2px solid #dcdcdc;
  background: #fafafa;
  color: #666;
  font-weight: 400;
  vertical-align: bottom;
}
thead th {
  height: 44px;
  padding: 0;
  border-right-color: #e4e4e4;
  border-bottom-color: #b8b8b8;
  background: linear-gradient(#fff, #f6f6f6);
  vertical-align: middle;
}
thead .corner {
  border-right-color: #b8b8b8;
}
.corner svg {
  margin-left: 9px;
}
th.picked {
  background: #f0f0f0;
  color: #217346;
}
td {
  height: 26px;
  padding: 2px 0 0 4px;
  border-right: 2px solid #d2d2d2;
  border-bottom: 2px solid #d2d2d2;
  white-space: nowrap;
  vertical-align: bottom;
}
td b {
  font-family: "Liberation Sans", sans-serif;
  font-size: 21px;
}
.num {
  padding-left: 0;
  text-align: center;
}
.titles td {
  height: 84px;
  line-height: 26px;
}
.current {
  position: relative;
}
.selection {
  position: absolute;
  top: -4px;
  left: -3px;
  width: 137px;
  height: 32px;
  border: 4px solid #217346;
}
.selection::after {
  position: absolute;
  right: -7px;
  bottom: -7px;
  width: 12px;
  height: 12px;
  border: 2px solid #fff;
  border-right: 0;
  border-bottom: 0;
  background: #217346;
  content: "";
}

/* sheet tabs */
.sheets {
  display: flex;
  align-items: flex-start;
  flex: none;
  height: 52px;
  padding-left: 14px;
  border-top: 2px solid #c8c8c8;
  background: #efefef;
  color: #5f5f5f;
  font-size: 24px;
  line-height: 42px;
}
.step {
  display: flex;
  align-items: center;
  justify-content: center;
  width: 46px;
  height: 50px;
}
.sheets a,
.add {
  display: flex;
  align-items: center;
  height: 42px;
  margin-top: 2px;
  padding: 0 36px;
  border-right: 2px solid #cdcdcd;
}
.sheets a.active {
  height: 46px;
  margin: -2px 0 0 15px;
  padding: 2px 34px 0;
  border: 0;
  border-radius: 0 0 8px 8px;
  background: #fff;
  box-shadow: 0 2px 2px #a0a0a0;
  color: #218450;
  font-weight: 700;
}
.sheets .add {
  padding: 0 26px;
}

/* status bar */
.status {
  display: flex;
  align-items: center;
  flex: none;
  height: 46px;
  padding-right: 48px;
  border-top: 2px solid #a0a0a0;
  background: linear-gradient(#e3e3e3, #d8d8d8);
  color: #4d4d4d;
  font-size: 24px;
}
.ready {
  margin-right: auto;
  padding-left: 48px;
}
.view {
  display: flex;
  align-items: center;
  justify-content: center;
  width: 72px;
  height: 44px;
}
.view path {
  fill: none;
  stroke: #5c5c5c;
  stroke-width: 2;
}
.view.on {
  width: 74px;
  background: #a6a6a6;
}
.view.on path {
  stroke: #fff;
}
.zoom-btn {
  margin: 0 14px;
}
.zoom {
  width: 200px;
  height: 32px;
  appearance: none;
}
.zoom::-webkit-slider-runnable-track {
  height: 10px;
  border-radius: 5px;
  background: #9b9b9b;
}
.zoom::-webkit-slider-thumb {
  width: 32px;
  height: 32px;
  margin-top: -11px;
  border-radius: 16px;
  background: #fff;
  box-shadow: 0 1px 2px #888;
  appearance: none;
}
.percent {
  margin-left: 20px;
}
</style>
